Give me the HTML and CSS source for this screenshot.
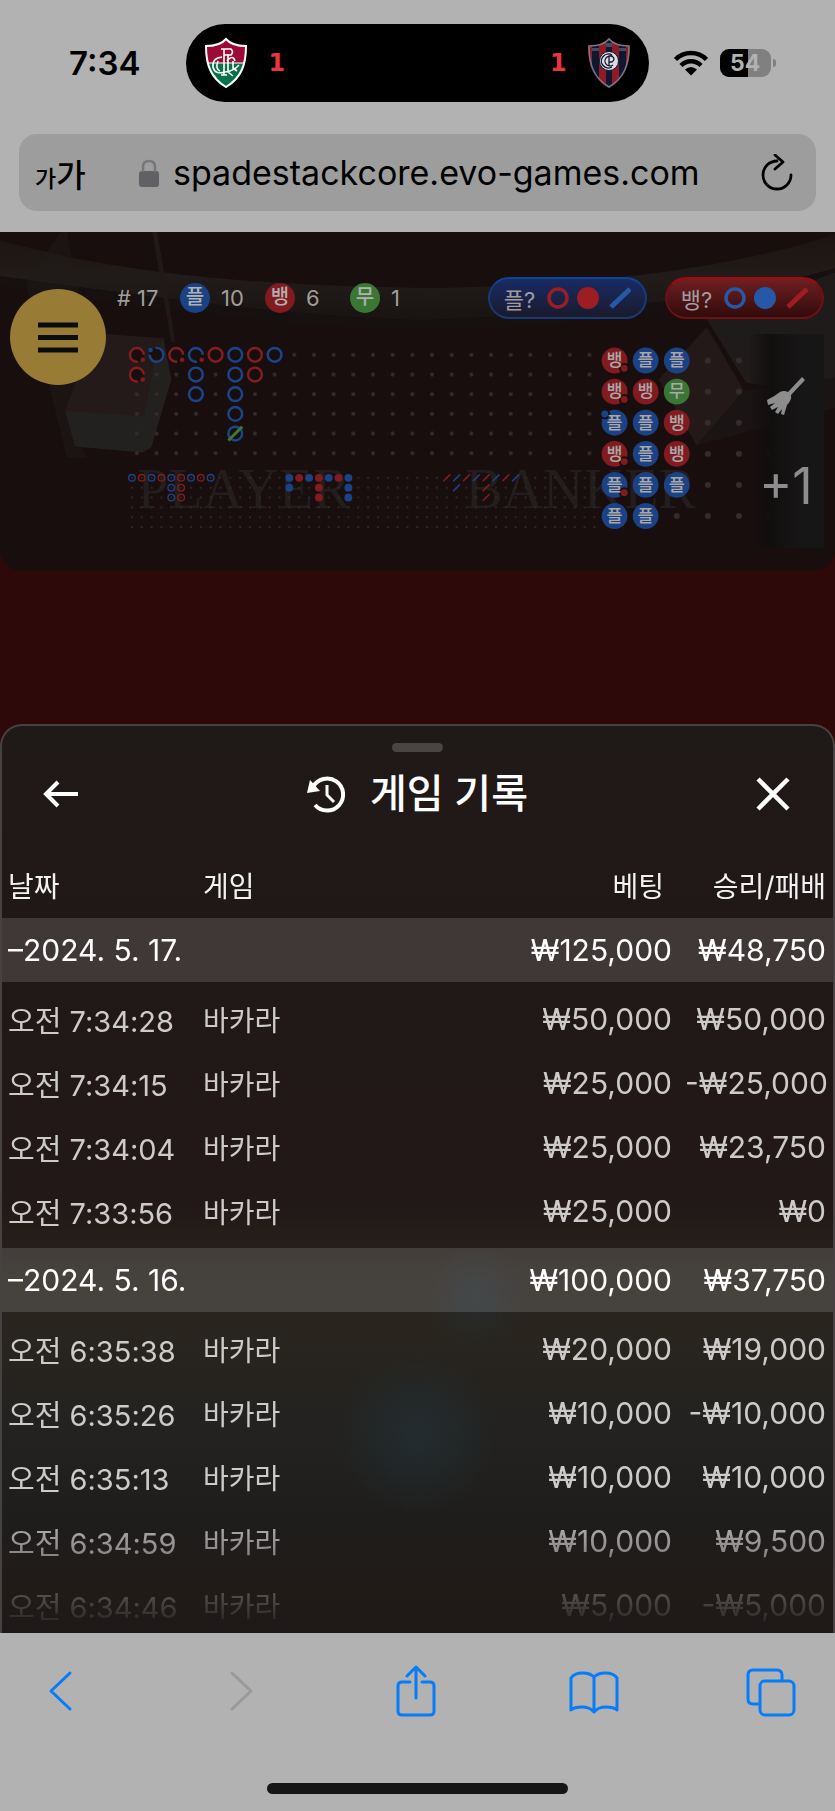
FILE: index.html
```html
<!DOCTYPE html>
<html lang="ko">

<head>
  <meta charset="utf-8">
  <meta name="viewport" content="width=device-width, initial-scale=1">
  <title>게임 기록</title>
  <link rel="stylesheet" href="styles.css">
</head>

<body>

  <header class="browser-top">
    <div class="status-bar">
      <span class="clock">7:34</span>
      <div class="island">
        <svg class="crest" viewBox="0 0 44 52">
          <clipPath id="shield"><path d="M22 1C17 7 9 9 1 9C1 28 6 42 22 51C38 42 43 28 43 9C35 9 27 7 22 1Z" /></clipPath>
          <g clip-path="url(#shield)">
            <rect width="44" height="26" fill="#9c0a35" />
            <rect y="26" width="44" height="26" fill="#08714a" />
            <path d="M0 26H44" stroke="#fff" stroke-width="1" />
          </g>
          <path d="M22 2C17 8 9 9 2 9C2 28 7 41 22 50C37 41 42 28 42 9C35 9 27 8 22 2Z" fill="none" stroke="#fff" stroke-width="2" />
          <g fill="none" stroke="#fff" stroke-width="1.600">
            <path d="M20 12V38M17 12H27Q30 15 27 18H20M17 38H23M24 17V35M23 24Q29 17 31 24M29 24V31L33 34" />
            <path d="M18 20Q8 21 9 30Q11 38 21 35Q30 34 35 28M14 24Q11 32 16 34M24 35L29 39" />
          </g>
        </svg>
        <span class="score">1</span>
        <span class="score score-away">1</span>
        <svg class="crest" viewBox="0 0 44 52">
          <g clip-path="url(#shield)">
            <rect width="44" height="52" fill="#8e1c28" />
            <path d="M5 9H12V50H5ZM19 0H25V52H19ZM32 9H39V50H32Z" fill="#10182f" />
            <path d="M5 11H12V14H5ZM19 6H25V10H19ZM32 11H39V14H32Z" fill="#454b60" />
          </g>
          <path d="M22 2C17 8 9 9 2 9C2 28 7 41 22 50C37 41 42 28 42 9C35 9 27 8 22 2Z" fill="none" stroke="#777983" stroke-width="1.500" />
          <circle cx="22" cy="24" r="9.500" fill="#dcdde4" stroke="#10182f" />
          <path d="M25 18A7 7 0 1 0 25 30M26 20A5 5 0 1 0 26 28M22 29V19H25Q29 22 25 25H22" fill="none" stroke="#10182f" stroke-width="1.300" />
        </svg>
      </div>
      <div class="status-icons">
        <svg class="wifi" viewBox="0 0 34 26">
          <g fill="none" stroke="#000" stroke-width="4.500">
            <path d="M1.500 9.500A22 22 0 0 1 32.500 9.500" />
            <path d="M7 15.500A14 14 0 0 1 27 15.500" />
          </g>
          <path d="M11 19.500Q17 14.500 23 19.500L17 25.500Z" />
        </svg>
        <span class="battery">54</span>
      </div>
    </div>

    <div class="address-bar">
      <button class="text-size" aria-label="텍스트 크기"><small>가</small>가</button>
      <label class="lock" for="address" aria-label="주소">
        <svg viewBox="0 0 20 28"><rect y="12" width="20" height="16" rx="3" fill="#606065" /><path d="M4 13V8Q4 2 10 2Q16 2 16 8V13" fill="none" stroke="#77777b" stroke-width="2.500" /></svg>
      </label>
      <input class="address" id="address" type="text" value="spadestackcore.evo-games.com">
      <button class="reload" aria-label="새로고침">
        <svg viewBox="0 0 34 38"><path d="M17 7A14 14 0 1 0 31 21M15 1L23 8L15 15" fill="none" stroke="#000" stroke-width="2.800" stroke-linecap="round" stroke-linejoin="round" /></svg>
      </button>
    </div>
  </header>

  <section class="board">
    <!-- table and chair behind the roads -->
    <svg class="backdrop" viewBox="0 0 835 337" preserveAspectRatio="xMidYMin slice">
      <defs>
        <linearGradient id="rail" x1="0" y1="0" x2="0" y2="1">
          <stop offset="0" stop-color="#1c1411" />
          <stop offset="0.5" stop-color="#211c19" />
          <stop offset="1" stop-color="#191311" />
        </linearGradient>
      </defs>
      <path d="M0 8C140 48 300 54 430 56C600 54 740 34 835 2V36C720 68 560 84 420 88C280 84 120 60 0 44Z" fill="url(#rail)" />
      <path d="M0 44C120 60 280 84 420 88C560 84 720 68 835 36V46C720 78 560 96 420 98C280 96 120 70 0 54Z" fill="#161010" />
      <path d="M62 0H68L79 56V210L88 225H68L52 160L27 50Z" fill="#211c1c" opacity="0.4" />
      <path d="M153 0H158L176 110H172Z" fill="#201918" />
      <path d="M96 101L164 106L172 147L145 186L66 178Z" fill="#241a19" />
      <path d="M164 106L172 147L152 215L143 220L76 214L66 178L145 184L155 130Z" fill="#232020" />
      <path d="M706 87L835 40V165L745 150Z" fill="#1f1b1b" />
      <path d="M706 95L743 158L696 213L658 147Z" fill="#231919" />
      <path d="M743 158L696 213L835 175V145Z" fill="#1b1414" />
      <g class="felt-text">
        <text x="138" y="275">PLAYER</text>
        <text x="465" y="275">BANKER</text>
      </g>
    </svg>

    <button class="menu-button" aria-label="메뉴">
      <svg viewBox="0 0 40 31"><path d="M0 3H40M0 15.500H40M0 28H40" stroke="#0a0c0a" stroke-width="5" /></svg>
    </button>

    <div class="stats">
      <div class="counts">
        <span># 17</span>
        <span class="count"><b class="badge player">플</b>10</span>
        <span class="count"><b class="badge banker">뱅</b>6</span>
        <span class="count"><b class="badge tie">무</b>1</span>
      </div>
      <button class="ask ask-player">플?
        <svg viewBox="0 0 84 22"><circle cx="11" cy="11" r="9" fill="none" stroke="#9c1e22" stroke-width="3.500" /><circle cx="41" cy="11" r="11" fill="#9c1e22" /><path d="M64 20L83 2" stroke="#2559a8" stroke-width="5" /></svg>
      </button>
      <button class="ask ask-banker">뱅?
        <svg viewBox="0 0 84 22"><circle cx="11" cy="11" r="9" fill="none" stroke="#2559a8" stroke-width="3.500" /><circle cx="41" cy="11" r="11" fill="#2559a8" /><path d="M64 20L83 2" stroke="#9c1e22" stroke-width="5" /></svg>
      </button>
    </div>

    <div class="roads">
      <svg class="road" viewBox="0 0 480 190">
        <defs>
          <pattern id="dots20" width="20" height="20" patternUnits="userSpaceOnUse"><circle cx="10" cy="10" r="2" /></pattern>
          <pattern id="dots10" width="10" height="10" patternUnits="userSpaceOnUse"><circle cx="5" cy="5" r="1" /></pattern>
          <circle id="ring" r="7" />
          <g id="pair"><circle r="7" stroke="none" /><path d="M1 7A7 7 0 1 1 7 0" /></g>
          <circle id="dot" r="2.300" />
          <circle id="eye" r="3.400" />
          <circle id="small" r="4" />
          <path id="slash" d="M-3.500 3.500L3.500 -3.500" />
        </defs>
        <rect width="480" height="120" fill="url(#dots20)" />
        <rect y="130" width="480" height="60" fill="url(#dots10)" />

        <!-- big road -->
        <g class="ring red-line">
          <use href="#pair" x="10" y="10" />
          <use href="#pair" x="10" y="30" />
          <use href="#pair" x="50" y="10" />
          <use href="#ring" x="90" y="10" />
          <use href="#ring" x="130" y="10" />
          <use href="#ring" x="130" y="30" />
        </g>
        <g class="ring blue-line">
          <use href="#pair" transform="translate(30 10) rotate(180)" />
          <use href="#pair" x="70" y="10" />
          <use href="#ring" x="70" y="30" />
          <use href="#ring" x="70" y="50" />
          <use href="#ring" x="110" y="10" />
          <use href="#ring" x="110" y="30" />
          <use href="#ring" x="110" y="50" />
          <use href="#ring" x="110" y="70" />
          <use href="#ring" x="110" y="90" />
          <use href="#ring" x="150" y="10" />
        </g>
        <g class="red-fill">
          <use href="#dot" x="16" y="15" />
          <use href="#dot" x="16" y="35" />
          <use href="#dot" x="56" y="15" />
          <use href="#dot" x="76" y="15" />
        </g>
        <use class="blue-fill" href="#dot" x="24" y="5" />
        <path d="M103 97L117 83" stroke="#3f7a35" stroke-width="3" />

        <!-- big eye road -->
        <g class="eye blue-line">
          <use href="#eye" x="5" y="135" />
          <use href="#eye" x="25" y="135" />
          <use href="#eye" x="45" y="135" />
          <use href="#eye" x="45" y="145" />
          <use href="#eye" x="45" y="155" />
          <use href="#eye" x="65" y="135" />
          <use href="#eye" x="85" y="135" />
        </g>
        <g class="eye red-line">
          <use href="#eye" x="15" y="135" />
          <use href="#eye" x="35" y="135" />
          <use href="#eye" x="55" y="135" />
          <use href="#eye" x="55" y="145" />
          <use href="#eye" x="55" y="155" />
          <use href="#eye" x="75" y="135" />
        </g>

        <!-- small road -->
        <g class="blue-fill">
          <use href="#small" x="165" y="135" />
          <use href="#small" x="165" y="145" />
          <use href="#small" x="185" y="135" />
          <use href="#small" x="205" y="135" />
          <use href="#small" x="225" y="135" />
          <use href="#small" x="225" y="145" />
          <use href="#small" x="225" y="155" />
        </g>
        <g class="red-fill">
          <use href="#small" x="175" y="135" />
          <use href="#small" x="195" y="135" />
          <use href="#small" x="195" y="145" />
          <use href="#small" x="195" y="155" />
          <use href="#small" x="215" y="135" />
        </g>

        <!-- cockroach road -->
        <g class="slash red-line">
          <use href="#slash" x="325" y="135" />
          <use href="#slash" x="345" y="135" />
          <use href="#slash" x="365" y="135" />
          <use href="#slash" x="365" y="145" />
          <use href="#slash" x="365" y="155" />
          <use href="#slash" x="385" y="135" />
        </g>
        <g class="slash blue-line">
          <use href="#slash" x="335" y="135" />
          <use href="#slash" x="335" y="145" />
          <use href="#slash" x="355" y="135" />
          <use href="#slash" x="375" y="135" />
          <use href="#slash" x="395" y="135" />
        </g>
      </svg>

      <svg class="road bead-road" viewBox="0 0 224 192">
        <defs>
          <pattern id="dots32" width="32" height="32" patternUnits="userSpaceOnUse"><circle cx="16" cy="16" r="3" /></pattern>
          <circle id="bead" r="13.300" />
        </defs>
        <rect width="224" height="192" fill="url(#dots32)" />
        <g class="red-fill">
          <use href="#bead" x="16" y="16" />
          <use href="#bead" x="16" y="48" />
          <use href="#bead" x="16" y="112" />
          <use href="#bead" x="48" y="48" />
          <use href="#bead" x="80" y="80" />
          <use href="#bead" x="80" y="112" />
        </g>
        <g class="blue-fill">
          <use href="#bead" x="16" y="80" />
          <use href="#bead" x="16" y="144" />
          <use href="#bead" x="16" y="176" />
          <use href="#bead" x="48" y="16" />
          <use href="#bead" x="48" y="80" />
          <use href="#bead" x="48" y="112" />
          <use href="#bead" x="48" y="144" />
          <use href="#bead" x="48" y="176" />
          <use href="#bead" x="80" y="16" />
          <use href="#bead" x="80" y="144" />
        </g>
        <use class="green-fill" href="#bead" x="80" y="48" />
        <g class="pair-dot red-fill">
          <circle cx="26" cy="24" r="4.500" />
          <circle cx="26" cy="56" r="4.500" />
          <circle cx="26" cy="120" r="4.500" />
          <circle cx="26" cy="152" r="4.500" />
        </g>
        <circle class="pair-dot blue-fill" cx="6" cy="71" r="4.500" />
        <g class="bead-text">
          <text x="16" y="22">뱅</text>
          <text x="48" y="22">플</text>
          <text x="80" y="22">플</text>
          <text x="16" y="54">뱅</text>
          <text x="48" y="54">뱅</text>
          <text x="80" y="54">무</text>
          <text x="16" y="86">플</text>
          <text x="48" y="86">플</text>
          <text x="80" y="86">뱅</text>
          <text x="16" y="118">뱅</text>
          <text x="48" y="118">플</text>
          <text x="80" y="118">뱅</text>
          <text x="16" y="150">플</text>
          <text x="48" y="150">플</text>
          <text x="80" y="150">플</text>
          <text x="16" y="182">플</text>
          <text x="48" y="182">플</text>
        </g>
      </svg>
    </div>

    <div class="tools">
      <button class="tool" aria-label="지우기">
        <svg viewBox="0 0 40 40"><path d="M36 1L39 4L25 19Q26 24 21 29L18 39L15 38L16 33L12 38L9 36L12 31L6 34L4 31L9 27L2 29L1 24Q9 20 14 16Q18 14 22 16Z" fill="#8d8d8d" /></svg>
      </button>
      <button class="tool">+1</button>
    </div>
  </section>

  <main class="sheet">
    <div class="handle"></div>
    <div class="sheet-header">
      <button class="icon-button" aria-label="뒤로">
        <svg viewBox="0 0 36 28"><path d="M35 14H3M15 2L3 14L15 26" fill="none" stroke="#fff" stroke-width="4" /></svg>
      </button>
      <h1 class="sheet-title">
        <svg viewBox="0 0 40 38"><path d="M7 12A16 16 0 1 1 9 30" fill="none" stroke="#fff" stroke-width="4" /><path d="M4 5L1 18L14 16Z" fill="#fff" /><path d="M21 10V20L28 27" fill="none" stroke="#fff" stroke-width="3" /></svg>
        게임 기록
      </h1>
      <button class="icon-button" aria-label="닫기">
        <svg viewBox="0 0 36 36"><path d="M3 3L33 33M33 3L3 33" stroke="#fff" stroke-width="4.500" /></svg>
      </button>
    </div>

    <div class="history-scroll">
      <table class="history">
        <thead>
          <tr><th>날짜</th><th>게임</th><th class="bet-head">베팅</th><th>승리/패배</th></tr>
        </thead>
        <tbody>
          <tr class="day"><td colspan="2">–2024. 5. 17.</td><td>₩125,000</td><td>₩48,750</td></tr>
        </tbody>
        <tbody class="games">
          <tr><td>오전 7:34:28</td><td>바카라</td><td>₩50,000</td><td>₩50,000</td></tr>
          <tr><td>오전 7:34:15</td><td>바카라</td><td>₩25,000</td><td>-₩25,000</td></tr>
          <tr><td>오전 7:34:04</td><td>바카라</td><td>₩25,000</td><td>₩23,750</td></tr>
          <tr><td>오전 7:33:56</td><td>바카라</td><td>₩25,000</td><td>₩0</td></tr>
        </tbody>
        <tbody>
          <tr class="day"><td colspan="2">–2024. 5. 16.</td><td>₩100,000</td><td>₩37,750</td></tr>
        </tbody>
        <tbody class="games">
          <tr><td>오전 6:35:38</td><td>바카라</td><td>₩20,000</td><td>₩19,000</td></tr>
          <tr><td>오전 6:35:26</td><td>바카라</td><td>₩10,000</td><td>-₩10,000</td></tr>
          <tr><td>오전 6:35:13</td><td>바카라</td><td>₩10,000</td><td>₩10,000</td></tr>
          <tr><td>오전 6:34:59</td><td>바카라</td><td>₩10,000</td><td>₩9,500</td></tr>
          <tr><td>오전 6:34:46</td><td>바카라</td><td>₩5,000</td><td>-₩5,000</td></tr>
        </tbody>
      </table>
    </div>
  </main>

  <footer class="browser-bottom">
    <nav class="toolbar">
      <button aria-label="이전"><svg viewBox="0 0 52 52"><path d="M35 8L16 26L35 44" /></svg></button>
      <button aria-label="다음" disabled><svg viewBox="0 0 52 52"><path d="M19 8L38 26L19 44" /></svg></button>
      <button aria-label="공유"><svg viewBox="0 0 52 52"><path d="M20 17H12Q8 17 8 21V46Q8 50 12 50H40Q44 50 44 46V21Q44 17 40 17H32M26 33V3M17 11L26 2L35 11" /></svg></button>
      <button aria-label="책갈피"><svg viewBox="0 0 52 52"><path d="M26 12Q22 8 15 8Q6 8 3 13V45Q6 42 14 42Q22 42 26 47Q30 42 38 42Q46 42 49 45V13Q46 8 37 8Q30 8 26 12V46" /></svg></button>
      <button aria-label="탭"><svg viewBox="0 0 52 52"><path d="M14 39H8Q3 39 3 34V10Q3 5 8 5H32Q37 5 37 10V15" /><rect x="15" y="16" width="34" height="34" rx="5" /></svg></button>
    </nav>
    <div class="home-bar"></div>
  </footer>

</body>

</html>
```

FILE: styles.css
```css
* {
  box-sizing: border-box;
}

body {
  display: flex;
  flex-direction: column;
  height: 100vh;
  margin: 0;
  background-color: #2e090a;
  font-family: Inter, "Noto Sans CJK KR", sans-serif;
}

button {
  padding: 0;
  border: none;
  background: none;
  color: inherit;
  font: inherit;
  cursor: pointer;
}

svg {
  display: block;
}

.browser-top {
  flex: none;
  padding: 24px 19px 21px;
  background-color: #b2b2b2;
}

.status-bar {
  display: grid;
  grid-template-columns: 1fr 58% 1fr;
  height: 78px;
}

.clock {
  align-self: center;
  padding-left: 50px;
  font-size: 33px;
  font-weight: 600;
}

.island {
  display: flex;
  align-items: center;
  gap: 20px;
  padding: 0 18px;
  border-radius: 39px;
  background-color: #000;
}

.crest {
  width: 44px;
  height: 52px;
}

.score {
  color: #e8373a;
  font-family: "DejaVu Sans", sans-serif;
  font-size: 24px;
  font-weight: bold;
}

.score-away {
  margin-left: auto;
}

.status-icons {
  display: flex;
  align-items: center;
  gap: 12px;
  padding-left: 25px;
}

.wifi {
  flex: none;
  width: 34px;
  height: 26px;
}

.battery {
  position: relative;
  flex: none;
  width: 51px;
  height: 28px;
  border-radius: 9px;
  background: linear-gradient(90deg, #000 54%, #808080 54%);
  color: #b2b2b2;
  font-size: 23px;
  font-weight: 700;
  line-height: 28px;
  text-align: center;
}

.battery::after {
  content: "";
  position: absolute;
  top: 10px;
  right: -5px;
  width: 3px;
  height: 8px;
  border-radius: 0 4px 4px 0;
  background-color: #808080;
}

.address-bar {
  display: flex;
  align-items: center;
  height: 77px;
  margin-top: 32px;
  padding: 0 22px 0 16px;
  border-radius: 18px;
  background-color: #9d9d9d;
}

.text-size {
  width: 104px;
  font-size: 32px;
  font-weight: 500;
  text-align: left;
  white-space: nowrap;
}

.text-size small {
  font-size: 23px;
}

.lock svg {
  width: 20px;
  height: 28px;
}

.address {
  flex: 1;
  min-width: 0;
  padding: 0 0 0 14px;
  border: none;
  outline: none;
  background: none;
  color: #000;
  font-family: inherit;
  font-size: 34px;
}

.reload svg {
  width: 34px;
  height: 38px;
}

.board {
  position: relative;
  flex: none;
  padding: 45px 11px 38px 117px;
  border-radius: 0 0 20px 20px;
  overflow: hidden;
  background-color: #190e0e;
}

.backdrop {
  position: absolute;
  top: 0;
  left: 0;
  width: 100%;
  height: 100%;
}

.felt-text {
  fill: #231d1d;
  font-family: "Liberation Serif", serif;
  font-size: 56px;
}

.menu-button {
  position: absolute;
  top: 57px;
  left: 10px;
  display: flex;
  align-items: center;
  justify-content: center;
  width: 96px;
  height: 96px;
  border-radius: 50%;
  background-color: #987b35;
}

.menu-button svg {
  width: 40px;
  height: 31px;
}

.stats {
  position: relative;
  display: flex;
  align-items: center;
  gap: 18px;
}

.counts {
  display: grid;
  grid-template-columns: 63px 85px 85px 85px;
  align-items: center;
  margin-right: auto;
  color: #a19d9c;
  font-size: 22px;
}

.count {
  display: flex;
  align-items: center;
  gap: 11px;
}

.badge {
  width: 30px;
  height: 30px;
  border-radius: 50%;
  color: #b3b0b0;
  font-size: 20px;
  font-weight: 500;
  line-height: 29px;
  text-align: center;
}

.player {
  background-color: #1a4285;
}

.banker {
  background-color: #821b1f;
}

.tie {
  background-color: #3a7734;
}

.ask {
  display: flex;
  align-items: center;
  justify-content: center;
  gap: 12px;
  width: 159px;
  height: 42px;
  border: 2px solid #173a79;
  border-radius: 21px;
  color: #a19ca2;
  font-size: 22px;
}

.ask svg {
  width: 84px;
  height: 22px;
}

.ask-player {
  border-top-color: #0f4597;
  background: linear-gradient(#192b64, #1a1a2c);
}

.ask-banker {
  border-color: #701012;
  border-top-color: #a00a0c;
  background: linear-gradient(#701f20, #310b0c);
}

.roads {
  position: relative;
  display: grid;
  grid-template-columns: 473fr 218fr;
  margin: 26px 7px 0 10px;
}

.road {
  width: 100%;
  fill: #352c2b;
}

.ring {
  fill: #190e0e;
  stroke-width: 2.5;
}

.eye {
  fill: none;
  stroke-width: 1.3;
}

.slash {
  fill: none;
  stroke-width: 1.5;
}

.red-line {
  stroke: #821d20;
}

.blue-line {
  stroke: #1b448a;
}

.red-fill {
  fill: #821b1f;
}

.blue-fill {
  fill: #1a4285;
}

.green-fill {
  fill: #3a7734;
}

.pair-dot {
  stroke: #190e0e;
  stroke-width: 2;
}

.bead-text {
  fill: #aaa7a9;
  font-size: 18px;
  font-weight: 500;
  text-anchor: middle;
}

.tools {
  position: absolute;
  top: 102px;
  right: 11px;
  bottom: 22px;
  display: flex;
  flex-direction: column;
  align-items: center;
  gap: 40px;
  width: 76px;
  padding-top: 42px;
  background: linear-gradient(90deg, transparent, #110e0e 30%, #171616 70%);
}

.tool {
  color: #8d8d8d;
  font-size: 50px;
}

.tool svg {
  width: 40px;
  height: 40px;
}

.sheet {
  display: flex;
  flex: 1;
  flex-direction: column;
  min-height: 0;
  margin-top: 154px;
  border: 2px solid #474241;
  border-bottom: none;
  border-radius: 22px 22px 0 0;
  overflow: hidden;
  background:
    radial-gradient(circle at 50% 78%, #222c2f, transparent 80px),
    radial-gradient(circle at 57% 63%, #262b2e, transparent 50px),
    linear-gradient(#1f1918, #201817 20%, #211817 52%, #27221d 60%, #29251e 66%, #232221 78%, #1e1d1c 88%, #211b18 95%, #1d1918);
  color: #fff;
}

.handle {
  flex: none;
  align-self: center;
  width: 51px;
  height: 9px;
  margin-top: 17px;
  border-radius: 5px;
  background-color: #4a4544;
}

.sheet-header {
  display: flex;
  flex: none;
  align-items: center;
  justify-content: space-between;
  height: 84px;
  padding: 0 42px 0 41px;
}

.icon-button svg {
  width: 36px;
  height: 36px;
}

.sheet-title {
  display: flex;
  align-items: center;
  gap: 24px;
  margin: 0;
  font-size: 40px;
  font-weight: 500;
  line-height: 40px;
}

.sheet-title svg {
  width: 40px;
  height: 38px;
}

.history-scroll {
  flex: 1;
  min-height: 0;
  overflow: hidden;
  -webkit-mask-image: linear-gradient(#000 calc(100% - 130px), transparent);
  mask-image: linear-gradient(#000 calc(100% - 130px), transparent);
}

.history {
  width: 100%;
  border-collapse: collapse;
  table-layout: fixed;
  font-size: 30px;
  white-space: nowrap;
}

.history th,
.history td {
  height: 64px;
  padding: 0 7px 0 6px;
  text-align: right;
}

.history th {
  height: 82px;
  padding-top: 16px;
  color: #f2f1f1;
  font-size: 28px;
  font-weight: 400;
}

.history th:nth-child(1) {
  width: 195px;
  text-align: left;
}

.history th:nth-child(2),
.history td:first-child,
.games td:nth-child(2) {
  text-align: left;
}

.history th:nth-child(4) {
  width: 154px;
}

.history .bet-head {
  padding-right: 15px;
}

.day {
  background-color: rgba(255, 255, 255, 0.14);
}

.games {
  color: #cdcaca;
}

.games td:first-child {
  font-size: 29px;
}

.games td:nth-child(2) {
  font-size: 28px;
}

/* small gap above and below each day's games */
.games::before,
.games::after {
  content: "";
  display: table-row;
  height: 5px;
}

.browser-bottom {
  flex: none;
  height: 178px;
  padding-top: 32px;
  background-color: #b2b2b2;
}

.toolbar {
  display: flex;
  justify-content: space-between;
  padding: 0 38px 0 35px;
}

.toolbar svg {
  width: 52px;
  height: 52px;
  fill: none;
  stroke: #067cf8;
  stroke-width: 3;
  stroke-linecap: round;
  stroke-linejoin: round;
}

.toolbar button:disabled svg {
  stroke: #999;
}

.home-bar {
  width: 36%;
  height: 11px;
  margin: 66px auto 0;
  border-radius: 6px;
  background-color: #161616;
}
```
